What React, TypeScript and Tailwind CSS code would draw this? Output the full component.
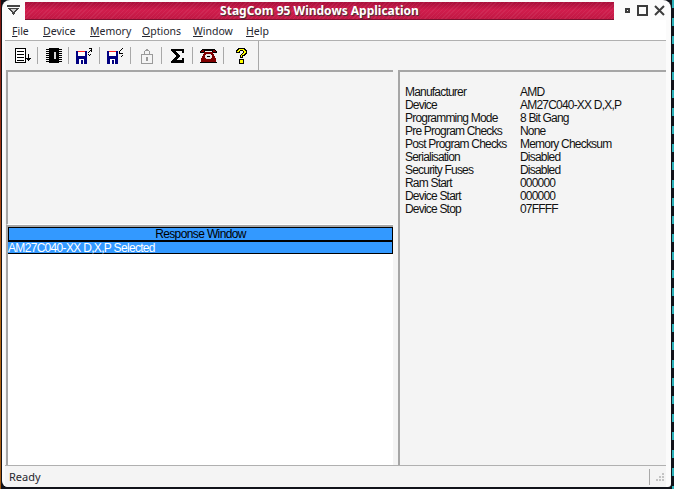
import React from "react";

const rows: [string, string][] = [
  ["Manufacturer", "AMD"],
  ["Device", "AM27C040-XX D,X,P"],
  ["Programming Mode", "8 Bit Gang"],
  ["Pre Program Checks", "None"],
  ["Post Program Checks", "Memory Checksum"],
  ["Serialisation", "Disabled"],
  ["Security Fuses", "Disabled"],
  ["Ram Start", "000000"],
  ["Device Start", "000000"],
  ["Device Stop", "07FFFF"],
];

const menus: [string, string, string][] = [
  ["F", "ile", "w-[31px]"],
  ["D", "evice", "w-[47px]"],
  ["M", "emory", "w-[52px]"],
  ["O", "ptions", "w-[51px]"],
  ["W", "indow", "w-[53px]"],
  ["H", "elp", "w-[30px]"],
];

const Cell = ({ children, className = "" }: { children: React.ReactNode; className?: string }) => (
  <div className={`w-[31px] h-full flex items-center justify-center shrink-0 relative ${className}`}>
    {children}
    <div className="absolute right-0 top-[6px] h-[17px] w-px bg-[#a8a8a8]" />
  </div>
);

const Pix = ({ w, children }: { w: number; children: React.ReactNode }) => (
  <svg width={w} height="16" viewBox={`0 0 ${w} 16`} shapeRendering="crispEdges" className="shrink-0">
    {children}
  </svg>
);

const Floppy = ({ out }: { out: boolean }) => (
  <Pix w={17}>
    <rect x="0" y="3" width="11" height="13" fill="#000080" />
    <rect x="2" y="3" width="7" height="1" fill="#ff2020" />
    <rect x="2" y="4" width="7" height="4" fill="#ffffff" />
    <rect x="3" y="11" width="5" height="5" fill="#ffffff" />
    <rect x="5" y="12" width="2" height="4" fill="#000080" />
    {out ? (
      <path d="M13 0h3v1h-3zM15 1h1v3h-1zM14 2h1v1h-1zM13 3h1v1h-1zM12 4h1v1h-1zM14 6h1v1h-1zM13 7h1v1h-1zM12 6h1v1h-1z" fill="#000" />
    ) : (
      <path d="M15 0h1v1h-1zM14 1h1v1h-1zM13 2h1v1h-1zM12 3h1v3h-1zM13 5h3v1h-3zM15 7h1v1h-1zM14 8h1v1h-1z" fill="#000" />
    )}
  </Pix>
);

export default function App() {
  return (
    <div className="w-[674px] h-[489px] bg-[#11131a] overflow-hidden flex font-['Liberation_Sans',sans-serif]">
      <div className="w-px h-full shrink-0 bg-[linear-gradient(180deg,#7a1410_0%,#a83a10_35%,#b86a10_60%,#a85a10_100%)]" />
      <div className="w-px h-full shrink-0" />
      <div className="w-[669px] h-[487px] shrink-0 bg-[#fbfbfb] rounded-t-[8px] rounded-bl-[6px] rounded-br-[3px] flex flex-col overflow-hidden">
        {/* Title bar */}
        <div className="h-[20px] flex items-center shrink-0">
          <div className="w-[23px] h-full flex items-center justify-center pt-[1px]">
            <svg width="13" height="11" viewBox="0 0 13 11" shapeRendering="crispEdges">
              <path d="M0 0h13v2H0z" fill="#444" />
              <path d="M1 3h11L6.5 10z" fill="#444" />
              <path d="M4 4h5L6.5 7z" fill="#cfcfcf" />
            </svg>
          </div>
          <div className="w-[589px] h-[18px] mt-[2px] flex items-center justify-center pt-[1px] border-b border-[#7b1030] bg-[repeating-linear-gradient(135deg,rgba(255,255,255,0.06)_0px,rgba(255,255,255,0.06)_1px,transparent_1px,transparent_3px),linear-gradient(180deg,#a80f3a_0%,#d01c4c_50%,#c01844_100%)]">
            <span className="text-[12px] font-bold text-white font-['Noto_Sans',sans-serif] [text-shadow:1px_1px_1px_#333]">
              StagCom 95 Windows Application
            </span>
          </div>
          <div className="flex-1 flex items-center justify-between pl-[11px] pr-[6px]">
            <div className="w-[5px] h-[5px] border-2 border-[#3c3c3c] mt-[1px]" />
            <div className="w-[11px] h-[11px] border-2 border-[#3c3c3c]" />
            <svg width="11" height="11" viewBox="0 0 11 11">
              <path d="M1 1l9 9M10 1l-9 9" stroke="#3c3c3c" strokeWidth="2" />
            </svg>
          </div>
        </div>
        {/* Menu bar */}
        <div className="h-[21px] bg-white shrink-0 ml-[3px] mr-[5px] border-b border-[#b0b0b0] flex items-center pl-[7px] pt-[3px] text-[10.5px] text-[#26262e] font-['Noto_Sans',sans-serif]">
          {menus.map(([a, b, w]) => (
            <span key={a + b} className={`${w} shrink-0`}>
              <span className="underline">{a}</span>
              {b}
            </span>
          ))}
        </div>
        <div className="flex-1 min-h-0 ml-[3px] mr-[5px] flex flex-col bg-[#f4f4f4]">
          {/* Toolbar */}
          <div className="h-[29px] shrink-0 flex items-center pl-[2px]">
            <Cell>
              <Pix w={16}>
                <path d="M.5.5h10v14H.5z" fill="#fff" stroke="#000" />
                <path d="M2 3h7v1H2zM2 6h7v1H2zM2 9h7v1H2zM2 12h7v1H2z" fill="#000" />
                <path d="M13 6h1v5h-1zM11 10h5v1h-5zM12 11h3v1h-3zM13 12h1v1h-1z" fill="#000" />
              </Pix>
            </Cell>
            <Cell>
              <Pix w={16}>
                <rect x="3" y="0" width="10" height="15" fill="#000" />
                <path d="M0 1h3v1H0zM0 3h3v1H0zM0 5h3v1H0zM0 7h3v1H0zM0 9h3v1H0zM0 11h3v1H0zM0 13h3v1H0zM13 1h3v1h-3zM13 3h3v1h-3zM13 5h3v1h-3zM13 7h3v1h-3zM13 9h3v1h-3zM13 11h3v1h-3zM13 13h3v1h-3z" fill="#000" />
                <rect x="8" y="4" width="2" height="7" fill="#d8d8d8" />
              </Pix>
            </Cell>
            <Cell><Floppy out /></Cell>
            <Cell><Floppy out={false} /></Cell>
            <Cell>
              <Pix w={12}>
                <rect x=".5" y="6.5" width="11" height="9" fill="#f4f4f4" stroke="#9a9a9a" />
                <path d="M3 6V3h1V2h1V1h2v1h1v1h1v3H8V3H4v3z" fill="#9a9a9a" />
                <rect x="5" y="9" width="2" height="4" fill="#9a9a9a" />
              </Pix>
            </Cell>
            <Cell>
              <Pix w={14}>
                <path d="M0 1h13v4h-2V3H5l4 5-4 4h6v-2h2v5H0v-2l5-5-5-5z" fill="#000" />
              </Pix>
            </Cell>
            <Cell>
              <Pix w={17}>
                <path d="M0 5V3h1V2h1V1h13v1h1v1h1v2h-5V3H5v2z" fill="#000" />
                <path d="M1 4V3h1V2h13v1h1v1h-3V2H4v2z" fill="#800000" />
                <path d="M4 4h9v2h1v2h1v2h1v4H1v-4h1V8h1V6h1z" fill="#800000" />
                <path d="M0 14h17v1H0z" fill="#000" />
                <path d="M6 6h5v1h1v3h-1v1H6v-1H5V7h1z" fill="#e8e8e8" />
                <rect x="7" y="8" width="3" height="1" fill="#000" />
              </Pix>
            </Cell>
            <div className="w-[35px] h-full shrink-0 flex items-center justify-center border-r border-[#a8a8a8]">
              <Pix w={11}>
                <path d="M2 0h7v1h1v1h1v4h-1v1H9v1H7v2H4V7h1V6h1V5h1V3H4v2H0V2h1V1h1z" fill="#000" />
                <path d="M3 1h5v1h1v1h1v2H9v1H8v1H6v2H5V7h1V6h1V5h1V3H7V2H4v1H3v1H1V3h1V2h1z" fill="#ffff00" />
                <path d="M3 11h5v5H3z" fill="#000" />
                <path d="M4 12h3v3H4z" fill="#ffff00" />
              </Pix>
            </div>
          </div>
          {/* Body */}
          <div className="flex-1 min-h-0 flex pl-[1px]">
            <div className="w-[387px] flex flex-col shrink-0">
              <div className="h-[155px] shrink-0 border-t-2 border-l-2 border-[#a6a6a6] border-b border-b-white" />
              <div className="flex-1 min-h-0 flex flex-col border-t-2 border-l-2 border-[#a6a6a6] bg-white">
                <div className="h-[15px] shrink-0 bg-[#3399ff] border-t border-l border-r border-b-2 border-black flex items-center justify-center text-[12px] tracking-[-0.62px] text-black leading-none">
                  Response Window
                </div>
                <div className="h-[12px] shrink-0 bg-[#3399ff] border-r border-b border-black flex items-center text-[12px] tracking-[-0.68px] text-white leading-none whitespace-nowrap">
                  AM27C040-XX D,X,P Selected
                </div>
              </div>
            </div>
            <div className="w-[5px] shrink-0" />
            <div className="flex-1 border-t-2 border-l-2 border-[#a6a6a6] pl-[5px] pt-[14px] text-[12px] tracking-[-0.8px] text-[#111] leading-[13px]">
              {rows.map(([k, v]) => (
                <div key={k} className="flex h-[13px]">
                  <span className="w-[115px] shrink-0 whitespace-nowrap">{k}</span>
                  <span className="whitespace-nowrap">{v}</span>
                </div>
              ))}
            </div>
          </div>
          {/* Status bar */}
          <div className="h-[22px] shrink-0 border-t border-[#b0b0b0] flex items-center pl-[4px] pr-[1px] text-[11px] text-[#26262e] font-['Noto_Sans',sans-serif]">
            <span className="flex-1 pt-[2px]">Ready</span>
            <div className="w-px h-[16px] bg-[#a8a8a8] mr-[6px]" />
            <svg width="9" height="8" viewBox="0 0 9 8" shapeRendering="crispEdges">
              <path d="M6 0h2v2H6zM3 3h2v2H3zM6 3h2v2H6zM0 6h2v2H0zM3 6h2v2H3zM6 6h2v2H6z" fill="#c4c4c4" />
            </svg>
          </div>
        </div>
      </div>
      <div className="w-px h-full shrink-0" />
      <div className="w-[2px] h-full shrink-0 bg-[repeating-linear-gradient(180deg,#2ab0b8_0px,#2ab0b8_8px,#11131a_8px,#11131a_18px)]" />
    </div>
  );
}
